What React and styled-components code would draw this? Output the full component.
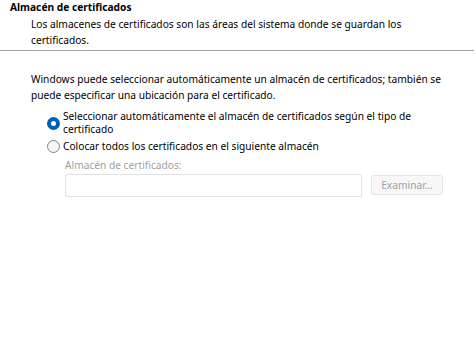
import React from "react";
import styled, { createGlobalStyle } from "styled-components";

const GlobalStyle = createGlobalStyle`
  html, body {
    margin: 0;
    padding: 0;
    background: #ffffff;
  }
  body {
    font-family: "Segoe UI", "Noto Sans", sans-serif;
    font-size: 10.2px;
    color: #000000;
  }
`;

const Page = styled.div`
  width: 476px;
  height: 359px;
  background: #ffffff;
  overflow: hidden;
  display: flex;
  flex-direction: column;
`;

const Header = styled.div`
  padding: 0 0 0 10px;
  height: 50px;
  border-bottom: 1px solid #a0a0a0;
  margin-right: 2px;
`;

const Title = styled.div`
  font-weight: bold;
  line-height: 14px;
`;

const Subtitle = styled.div`
  margin-top: 2px;
  padding-left: 21px;
  line-height: 16px;
  white-space: nowrap;
`;

const Body = styled.div`
  padding: 20px 0 0 31px;
  display: flex;
  flex-direction: column;
`;

const Paragraph = styled.div`
  line-height: 16px;
  white-space: nowrap;
`;

const Options = styled.div`
  padding: 7px 0 0 16px;
  display: flex;
  flex-direction: column;
  gap: 2px;
`;

const Option = styled.label`
  display: flex;
  align-items: center;
  gap: 3px;
  line-height: ${(p) => (p.$multi ? "13px" : "16px")};
  white-space: nowrap;
`;

const RadioDot = styled.span`
  flex: none;
  width: 13px;
  height: 13px;
  box-sizing: border-box;
  border-radius: 50%;
  border: ${(p) => (p.$checked ? "4px solid #005fb8" : "1px solid #858585")};
  background: ${(p) => (p.$checked ? "#ffffff" : "#f5f5f5")};
`;

const StoreBlock = styled.div`
  padding: 1px 0 0 18px;
  display: flex;
  flex-direction: column;
  gap: 1px;
`;

const StoreLabel = styled.div`
  color: #a0a0a0;
  line-height: 16px;
`;

const StoreRow = styled.div`
  display: flex;
  align-items: flex-start;
  gap: 9px;
`;

const StoreInput = styled.div`
  width: 297px;
  height: 23px;
  box-sizing: border-box;
  border: 1px solid #e2e2e2;
  border-radius: 2px;
  background: #ffffff;
`;

const BrowseButton = styled.button`
  width: 72px;
  height: 20px;
  margin-top: 1px;
  box-sizing: border-box;
  border: 1px solid #e5e5e5;
  border-radius: 3px;
  background: #f7f7f7;
  color: #a0a0a0;
  font-family: inherit;
  font-size: 10.2px;
  padding: 0;
`;

export default function App() {
  return (
    <Page>
      <GlobalStyle />
      <Header>
        <Title>Almacén de certificados</Title>
        <Subtitle>
          Los almacenes de certificados son las áreas del sistema donde se guardan los
          <br />
          certificados.
        </Subtitle>
      </Header>
      <Body>
        <Paragraph>
          Windows puede seleccionar automáticamente un almacén de certificados; también se
          <br />
          puede especificar una ubicación para el certificado.
        </Paragraph>
        <Options>
          <Option $multi>
            <RadioDot $checked />
            <span>
              Seleccionar automáticamente el almacén de certificados según el tipo de
              <br />
              certificado
            </span>
          </Option>
          <Option>
            <RadioDot />
            <span>Colocar todos los certificados en el siguiente almacén</span>
          </Option>
          <StoreBlock>
            <StoreLabel>Almacén de certificados:</StoreLabel>
            <StoreRow>
              <StoreInput />
              <BrowseButton disabled>Examinar…</BrowseButton>
            </StoreRow>
          </StoreBlock>
        </Options>
      </Body>
    </Page>
  );
}
